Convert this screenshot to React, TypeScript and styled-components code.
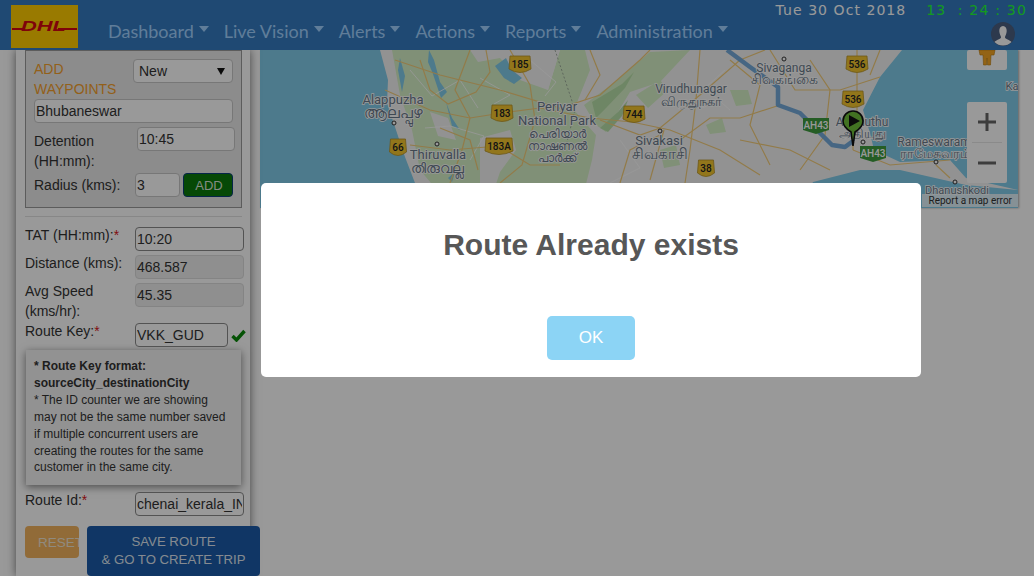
import React from "react"
import styled, { createGlobalStyle } from "styled-components"

const GlobalStyle = createGlobalStyle`
  html, body { margin: 0; padding: 0; background: #fff; }
  body { font-family: "Liberation Sans", Arial, sans-serif; overflow: hidden; }
`

const Page = styled.div`
  width: 1034px;
  height: 576px;
  overflow: hidden;
  display: flex;
  flex-direction: column;
`

const Header = styled.header`
  height: 50px;
  flex: none;
  background: #347bc0;
  display: flex;
  padding: 5px 7px 0 11px;
  box-sizing: border-box;
  position: relative;
  z-index: 2;
`

const Logo = styled.svg`
  width: 67px;
  height: 43px;
  flex: none;
`

const Nav = styled.nav`
  display: flex;
  gap: 15px;
  margin-left: 30px;
  padding-top: 15px;
  height: 24px;
`

const NavItem = styled.span`
  font-family: Lato, sans-serif;
  font-size: 18px;
  line-height: 24px;
  color: #a0d0ff;
  display: flex;
  align-items: center;
  gap: 5px;
  margin-top: -3px;
  &::after {
    content: "";
    border-left: 5.5px solid transparent;
    border-right: 5.5px solid transparent;
    border-top: 6px solid #a0d0ff;
    margin-top: -3px;
  }
`

const HeaderRight = styled.div`
  margin-left: auto;
  display: flex;
  flex-direction: column;
  align-items: flex-end;
  margin-top: -2px;
`

const ClockRow = styled.div`
  display: flex;
  gap: 20px;
  height: 14px;
  align-items: center;
`

const DateText = styled.span`
  font-family: "DejaVu Sans", sans-serif;
  font-size: 14px;
  letter-spacing: 1.05px;
  color: #fff;
`

const TimeText = styled.span`
  font-family: "DejaVu Sans", sans-serif;
  font-size: 14px;
  letter-spacing: 1.2px;
  color: #22ff33;
  white-space: pre;
`

const Avatar = styled.svg`
  width: 24px;
  height: 24px;
  margin: 5px 12px 0 0;
`

const Body = styled.div`
  flex: 1;
  display: flex;
  min-height: 0;
`

const Sidebar = styled.aside`
  width: 234px;
  margin-left: 16px;
  flex: none;
  padding: 0 0 0 9px;
  box-sizing: border-box;
  background: #fff;
  box-shadow: 0 0 9px rgba(0, 0, 0, 0.55);
  position: relative;
  z-index: 1;
  color: #333;
  font-size: 14px;
  line-height: 20px;
`

const WaypointPanel = styled.section`
  width: 217px;
  height: 158px;
  box-sizing: border-box;
  border: 1px solid #999;
  background: #e9e9e9;
  padding: 8px 8px 0;
  display: flex;
  flex-direction: column;
  gap: 4px;
`

const PanelTop = styled.div`
  display: flex;
  justify-content: space-between;
  height: 36px;
`

const PanelTitle = styled.div`
  width: 90px;
  color: #f5a02c;
  font-size: 14px;
`

const SelectBox = styled.div`
  width: 100px;
  height: 24px;
  box-sizing: border-box;
  border: 1px solid #c6c6c6;
  border-radius: 4px;
  background: #fff;
  padding: 1px 5px;
  position: relative;
  &::after {
    content: "";
    position: absolute;
    right: 7px;
    top: 8px;
    border-left: 4px solid transparent;
    border-right: 4px solid transparent;
    border-top: 7px solid #111;
  }
`

const Field = styled.input<{ $w: number; $dark?: boolean; $off?: boolean }>`
  width: ${(p) => p.$w}px;
  height: 24px;
  flex: none;
  box-sizing: border-box;
  border: 1px solid ${(p) => (p.$dark ? "#8a8a8a" : p.$off ? "#dcdcdc" : "#c6c6c6")};
  border-radius: 4px;
  background: ${(p) => (p.$off ? "#eee" : "#fff")};
  padding: 0 1px;
  font: 14px "Liberation Sans", Arial, sans-serif;
  color: #333;
  outline: none;
`

const WaypointRow = styled.div<{ $h: number; $gap: number }>`
  display: flex;
  height: ${(p) => p.$h}px;
  gap: ${(p) => p.$gap}px;
`

const WaypointLabel = styled.label<{ $w: number; $top: number }>`
  width: ${(p) => p.$w}px;
  flex: none;
  margin-top: ${(p) => p.$top}px;
`

const AddButton = styled.button`
  width: 50px;
  height: 24px;
  margin-left: -1px;
  border: 1px solid #0b3f7a;
  border-radius: 4px;
  background: #0a7a0a;
  color: #dce8dc;
  font: 13px "Liberation Sans", Arial, sans-serif;
  padding: 0 0 0 2px;
`

const Divider = styled.hr`
  width: 217px;
  margin: 8px 0 10px;
  border: 0;
  border-top: 1px solid #e2e2e2;
`

const FormRows = styled.div`
  display: flex;
  flex-direction: column;
  gap: 4px;
`

const FormRow = styled.div<{ $h?: number }>`
  display: flex;
  height: ${(p) => p.$h ?? 24}px;
  align-items: flex-start;
`

const FormLabel = styled.label`
  width: 110px;
  flex: none;
  margin-top: -2px;
`

const Req = styled.span`
  color: #d9161a;
`

const Check = styled.svg`
  width: 15px;
  height: 13px;
  margin: 6px 0 0 3px;
  flex: none;
`

const Note = styled.div`
  width: 215px;
  height: 135px;
  box-sizing: border-box;
  margin: 3px 0 7px 1px;
  padding: 8px 8px 0;
  font-size: 12px;
  line-height: 16.9px;
  background: #f4f4f4;
  box-shadow: 0 2px 8px rgba(0, 0, 0, 0.5);
`

const Actions = styled.div`
  display: flex;
  margin-top: 10px;
  gap: 8px;
  align-items: flex-start;
`

const ResetButton = styled.button`
  width: 54px;
  height: 32px;
  flex: none;
  overflow: hidden;
  border: 0;
  border-radius: 4px;
  background: #f2b35e;
  color: #f0e6d4;
  font: 13.5px "Liberation Sans", Arial, sans-serif;
  padding: 0 0 0 13px;
  text-align: left;
  white-space: nowrap;
`

const SaveButton = styled.button`
  width: 173px;
  height: 50px;
  flex: none;
  border: 0;
  border-radius: 4px;
  background: #1b5aa8;
  color: #dfe7f0;
  font: 13.2px/18px "Liberation Sans", Arial, sans-serif;
  padding: 0;
`

const MapPane = styled.main`
  width: 758px;
  height: 158px;
  margin-left: 10px;
  flex: none;
  position: relative;
  overflow: hidden;
  box-shadow: 1px 0 2px rgba(0, 0, 0, 0.35);
`

const MapCanvas = styled.svg`
  display: block;
  width: 758px;
  height: 158px;
`

const PlaceName = styled.text<{ $size: number }>`
  font-family: Roboto, "Noto Sans", sans-serif;
  font-size: ${(p) => p.$size}px;
  fill: #6a7a8a;
  stroke: #fff;
  stroke-width: 1.6px;
  paint-order: stroke;
  text-anchor: middle;
`

const ShieldText = styled.text<{ $light?: boolean }>`
  font-family: Roboto, sans-serif;
  font-size: 10px;
  font-weight: 500;
  fill: ${(p) => (p.$light ? "#fff" : "#222")};
  text-anchor: middle;
`

const MapControl = styled.div`
  position: absolute;
  left: 707px;
  width: 40px;
  background: #fff;
  border-radius: 2px;
  display: flex;
  flex-direction: column;
  align-items: center;
`

const ZoomGlyph = styled.svg`
  width: 40px;
  height: 40px;
`

const ZoomLine = styled.div`
  width: 30px;
  height: 1px;
  background: #e6e6e6;
`

const MapError = styled.div`
  position: absolute;
  right: 0;
  bottom: 1px;
  height: 13px;
  padding: 0 6px 0 7px;
  background: rgba(255, 255, 255, 0.75);
  font: 10px/13px Roboto, sans-serif;
  color: #333;
`

const Overlay = styled.div`
  position: fixed;
  inset: 0;
  z-index: 5;
  background: rgba(0, 0, 0, 0.4);
  display: flex;
  justify-content: center;
  align-items: flex-start;
  padding: 183px 0 0 148px;
  box-sizing: border-box;
`

const Modal = styled.div`
  width: 660px;
  height: 194px;
  background: #fff;
  border-radius: 5px;
  display: flex;
  flex-direction: column;
  align-items: center;
`

const ModalTitle = styled.h2`
  margin: 44px 0 0;
  font-size: 30px;
  line-height: 36px;
  font-weight: 700;
  color: #575757;
`

const OkButton = styled.button`
  width: 88px;
  height: 44px;
  margin-top: 53px;
  border: 0;
  border-radius: 5px;
  background: #8cd4f5;
  color: #fff;
  font: 17px "Liberation Sans", Arial, sans-serif;
  padding: 0;
`

const menu = ["Dashboard", "Live Vision", "Alerts", "Actions", "Reports", "Administration"]

const shields: [number, number, string][] = [
  [520, 64, "185"],
  [502, 113, "183"],
  [499, 146, "183A"],
  [398, 147, "66"],
  [634, 114, "744"],
  [706, 168, "38"],
  [857, 64, "536"],
  [853, 99, "536"],
]

const places: [number, number, string, number][] = [
  [393, 104, "Alappuzha", 13],
  [393, 118, "ആലപ്പുഴ", 15],
  [438, 159, "Thiruvalla", 13],
  [437, 173, "തിരുവല്ല", 14],
  [557, 111, "Periyar", 13],
  [557, 125, "National Park", 13],
  [557, 138, "പെരിയാർ", 12],
  [557, 150, "നാഷണൽ", 12],
  [557, 162, "പാർക്ക്", 12],
  [691, 93, "Virudhunagar", 12],
  [691, 106, "விருதுநகர்", 13],
  [659, 145, "Sivakasi", 13],
  [660, 159, "சிவகாசி", 15],
  [784, 72, "Sivaganga", 12],
  [784, 84, "சிவகங்கை", 14],
  [862, 126, "Aththuthu", 12],
  [862, 138, "அதியுது", 13],
  [934, 146, "Rameswaram", 12],
  [935, 158, "ராமேசுவரம்", 13],
  [957, 194, "Dhanushkodi", 11],
  [1012, 90, "Ka", 11],
]

const greens = [
  "M392 50 H470 L478 62 L500 58 L520 80 L548 90 L560 50 H585 L590 70 L574 110 L596 135 L592 160 L580 208 H452 L420 170 L412 130 L400 95 Z",
  "M584 105 L615 82 L650 52 L690 50 L660 82 L630 92 L606 132 L596 125 Z",
  "M660 150 L676 145 L680 165 L664 168 Z",
  "M730 90 L748 90 L752 104 L736 106 Z",
  "M636 95 L660 80 L668 90 L648 108 Z",
  "M706 125 L722 118 L726 132 L710 134 Z",
]

const greys = [
  "M480 138 L510 130 L516 150 L500 172 L488 208 L480 208 Z",
  "M430 112 L448 118 L456 140 L438 136 Z",
  "M560 50 L548 90 L530 80 L546 50 Z",
]

const forest = ["M592 102 L622 84 L634 72 L625 88 L606 108 L596 118 Z", "M600 128 L618 112 L628 100 L622 116 L608 132 Z"]

const lakes = [
  "M429 50 L434 60 L440 82 L447 92 L441 98 L433 74 L428 62 Z",
  "M400 58 L405 76 L402 92 L398 70 Z",
  "M495 66 L506 58 L512 70 L522 78 L514 84 L504 78 Z",
  "M446 102 L452 118 L460 130 L452 126 Z",
  "M448 178 L455 172 L452 182 Z",
  "M888 94 L892 90 L893 96 Z",
]

const roads = [
  "M395 60 L440 75 L500 90 L560 108 L600 95 L640 60 L650 50",
  "M385 90 L430 110 L470 118 L502 113 L540 108 L590 118 L632 122 L670 130 L720 150 L760 175",
  "M470 50 L455 90 L470 118 L462 150 L450 183",
  "M510 50 L530 85 L535 120 L522 165 L500 183",
  "M410 145 L450 150 L499 146 L530 165 L560 165",
  "M600 120 L640 135 L660 128 L700 95 L740 60 L765 50",
  "M700 50 L696 100 L690 150 L685 183",
  "M620 183 L630 150 L660 135",
  "M857 50 L857 110 L853 130 L853 150",
  "M770 50 L795 90 L840 90 L880 77",
  "M780 105 L740 118 L710 118 L680 140",
  "M740 140 L790 150 L830 170",
  "M853 150 L890 165 L950 160",
  "M936 165 L950 178",
  "M420 60 L430 90 L448 104 L476 92 L490 72 L486 50",
  "M440 128 L470 140 L478 170",
  "M590 50 L600 75 L585 100",
  "M664 130 L650 180",
  "M730 60 L760 85 L750 125 L770 165",
  "M810 60 L830 90 L825 135 L800 170",
  "M880 50 L870 75",
]

const minorRoads = [
  "M410 70 L432 96 L460 80 L478 108",
  "M425 128 L450 126 L484 136 L470 160",
  "M530 60 L556 82 L545 96",
  "M480 78 L510 95 L494 104",
  "M620 140 L640 168 L610 183",
  "M725 70 L705 88 L730 110",
]

const Map = () => (
  <MapCanvas viewBox="260 50 758 158">
    <rect x="260" y="50" width="758" height="158" fill="#f4f4f4" />
    {greens.map((d) => (
      <path key={d} d={d} fill="#d6f0c6" />
    ))}
    {greys.map((d) => (
      <path key={d} d={d} fill="#f4f4f4" />
    ))}
    {forest.map((d) => (
      <path key={d} d={d} fill="#b8e0a8" />
    ))}
    <path d="M260 50 H380 L388 80 L387 103 L395 127 L405 157 L415 183 L430 208 H260 Z" fill="#80cbe9" />
    <path
      d="M902 50 L880 77 L863 110 L870 133 L874 150 L900 162 L950 160 L966 178 L1018 190 V50 Z"
      fill="#80cbe9"
    />
    <path d="M1018 208 V190 L966 185 L900 170 L860 170 L813 182 L800 208 Z" fill="#80cbe9" />
    {lakes.map((d) => (
      <path key={d} d={d} fill="#80cbe9" />
    ))}
    {minorRoads.map((d) => (
      <path key={d} d={d} fill="none" stroke="#fff" strokeWidth="0.8" />
    ))}
    {roads.map((d) => (
      <path key={d} d={d} fill="none" stroke="#f3cd7a" strokeWidth="1.2" />
    ))}
    <path d="M555 50 L575 110 L565 150" fill="none" stroke="#8e9a90" strokeWidth="0.8" strokeDasharray="2 2" />
    <path
      d="M727 50 L750 67 L778 87 L778 105 L800 113 L817 130 L832 145 L845 147 L853 141"
      fill="none"
      stroke="#6ea7d8"
      strokeWidth="4.5"
      strokeLinejoin="round"
      opacity="0.95"
    />
    {[
      [394, 123],
      [437, 144],
      [660, 131],
      [784, 59],
      [863, 142],
      [936, 162],
      [955, 182],
    ].map(([cx, cy]) => (
      <circle key={`${cx}-${cy}`} cx={cx} cy={cy} r="2" fill="#fff" stroke="#333" strokeWidth="1" />
    ))}
    {places.map(([x, y, name, size]) => (
      <PlaceName key={name + x} x={x} y={y} $size={size}>
        {name}
      </PlaceName>
    ))}
    {shields.map(([x, y, num]) => {
      const half = num.length > 3 ? 13 : num.length > 2 ? 10 : 7.5
      return (
        <g key={num + y}>
          <path
            d={`M${x - half} ${y - 8} H${x + half} L${x + half + 1} ${y + 5} Q${x} ${y + 12} ${x - half - 1} ${y + 5} Z`}
            fill="#f3c52e"
            stroke="#b4922a"
            strokeWidth="0.8"
          />
          <ShieldText x={x} y={y + 3.5}>
            {num}
          </ShieldText>
        </g>
      )
    })}
    {[
      [816, 125],
      [873, 153],
    ].map(([x, y]) => (
      <g key={x}>
        <path
          d={`M${x - 13} ${y - 7} H${x + 13} V${y + 5} L${x} ${y + 9} L${x - 13} ${y + 5} Z`}
          fill="#3f9b3f"
        />
        <ShieldText x={x} y={y + 3.5} $light>
          AH43
        </ShieldText>
      </g>
    ))}
    <path
      d="M853 146 L851 132 Q843 127 843 121 A10 10 0 1 1 863 121 Q863 127 855 132 Z"
      fill="#6fbf3a"
      stroke="#111"
      strokeWidth="1.6"
    />
    <path d="M849 115 L860 121 L849 127 Z" fill="#111" />
  </MapCanvas>
)

const App = () => (
  <>
    <GlobalStyle />
    <Page>
      <Header>
        <Logo viewBox="0 0 67 43">
          <rect width="67" height="43" fill="#ffcc00" />
          <rect x="1" y="23" width="12" height="2" fill="#d40511" />
          <rect x="47" y="23" width="19" height="2" fill="#d40511" />
          <text
            x="10"
            y="26"
            fontFamily="Liberation Sans"
            fontWeight="700"
            fontStyle="italic"
            fontSize="14"
            textLength="45"
            lengthAdjust="spacingAndGlyphs"
            fill="#d40511"
          >
            DHL
          </text>
        </Logo>
        <Nav>
          {menu.map((item) => (
            <NavItem key={item}>{item}</NavItem>
          ))}
        </Nav>
        <HeaderRight>
          <ClockRow>
            <DateText>Tue 30 Oct 2018</DateText>
            <TimeText>13  : 24 : 30</TimeText>
          </ClockRow>
          <Avatar viewBox="0 0 24 24">
            <circle cx="12" cy="12" r="12" fill="#4b5f80" />
            <path
              d="M12 4 C15 4 16 7 15.6 10 C15.3 12.5 14 14 14 15.5 C14 17 19 18 20.5 20 A12 12 0 0 1 3.5 20 C5 18 10 17 10 15.5 C10 14 8.7 12.5 8.4 10 C8 7 9 4 12 4 Z"
              fill="#fff"
            />
          </Avatar>
        </HeaderRight>
      </Header>
      <Body>
        <Sidebar>
          <WaypointPanel>
            <PanelTop>
              <PanelTitle>ADD WAYPOINTS</PanelTitle>
              <SelectBox>New</SelectBox>
            </PanelTop>
            <Field $w={199} value="Bhubaneswar" readOnly />
            <WaypointRow $h={42} $gap={0}>
              <WaypointLabel $w={103} $top={4}>
                Detention (HH:mm):
              </WaypointLabel>
              <Field $w={98} value="10:45" readOnly />
            </WaypointRow>
            <WaypointRow $h={24} $gap={4}>
              <WaypointLabel $w={97} $top={2}>
                Radius (kms):
              </WaypointLabel>
              <Field $w={45} value="3" readOnly />
              <AddButton>ADD</AddButton>
            </WaypointRow>
          </WaypointPanel>
          <Divider />
          <FormRows>
            <FormRow>
              <FormLabel>
                TAT (HH:mm):<Req>*</Req>
              </FormLabel>
              <Field $w={109} $dark value="10:20" readOnly />
            </FormRow>
            <FormRow>
              <FormLabel>Distance (kms):</FormLabel>
              <Field $w={109} $off value="468.587" readOnly />
            </FormRow>
            <FormRow $h={36}>
              <FormLabel>Avg Speed (kms/hr):</FormLabel>
              <Field $w={109} $off value="45.35" readOnly />
            </FormRow>
            <FormRow>
              <FormLabel>
                Route Key:<Req>*</Req>
              </FormLabel>
              <Field $w={93} $dark value="VKK_GUD" readOnly />
              <Check viewBox="0 0 15 13">
                <path d="M1.5 7 L5.5 11 L13.5 2" fill="none" stroke="#0a8a0a" strokeWidth="3.4" />
              </Check>
            </FormRow>
          </FormRows>
          <Note>
            <strong>* Route Key format: sourceCity_destinationCity</strong>
            <br />* The ID counter we are showing may not be the same number saved if multiple concurrent users are
            creating the routes for the same customer in the same city.
          </Note>
          <FormRow>
            <FormLabel>
              Route Id:<Req>*</Req>
            </FormLabel>
            <Field $w={109} $dark value="chenai_kerala_IN" readOnly />
          </FormRow>
          <Actions>
            <ResetButton>RESET</ResetButton>
            <SaveButton>
              SAVE ROUTE
              <br />& GO TO CREATE TRIP
            </SaveButton>
          </Actions>
        </Sidebar>
        <MapPane>
          <Map />
          <MapControl style={{ top: 0, height: 20 }}>
            <svg width="18" height="20" viewBox="0 0 18 20">
              <path
                d="M1 0 H17 L16 5 H13 L12.5 15 H9.5 L9 8 L8.5 15 H5.5 L5 5 H2 Z"
                fill="#f5a623"
                stroke="#b97a10"
                strokeWidth="0.6"
              />
            </svg>
          </MapControl>
          <MapControl style={{ top: 52, height: 81 }}>
            <ZoomGlyph viewBox="0 0 40 40">
              <path d="M11 18.5 H29 V21.5 H11 Z M18.5 11 H21.5 V29 H18.5 Z" fill="#666" />
            </ZoomGlyph>
            <ZoomLine />
            <ZoomGlyph viewBox="0 0 40 40">
              <path d="M11 18.5 H29 V21.5 H11 Z" fill="#666" />
            </ZoomGlyph>
          </MapControl>
          <MapError>Report a map error</MapError>
        </MapPane>
      </Body>
    </Page>
    <Overlay>
      <Modal>
        <ModalTitle>Route Already exists</ModalTitle>
        <OkButton>OK</OkButton>
      </Modal>
    </Overlay>
  </>
)

export default App
